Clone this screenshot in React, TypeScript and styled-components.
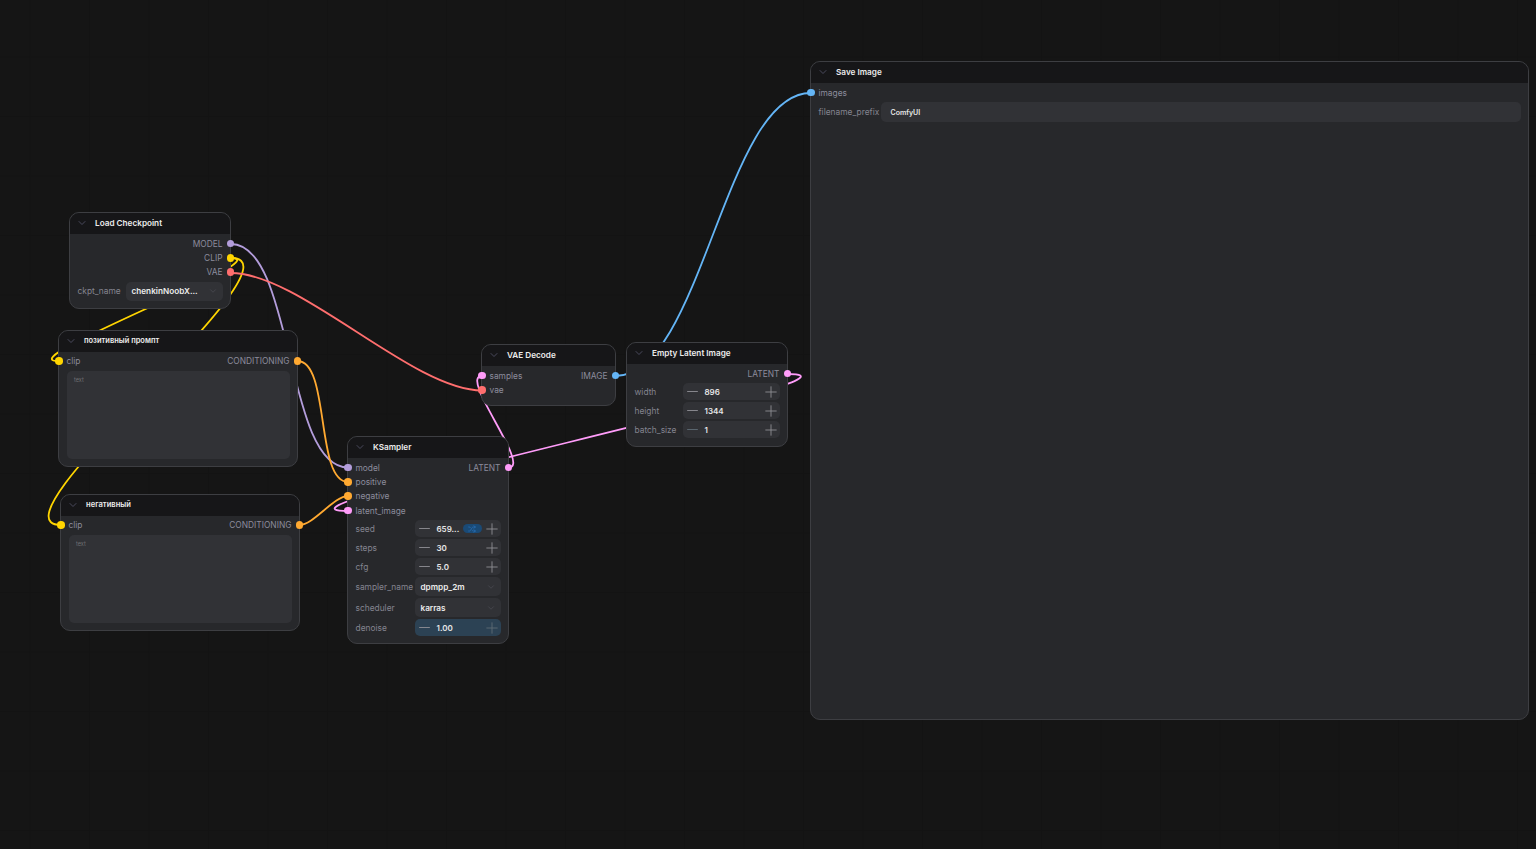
import React from "react";
import styled, { createGlobalStyle } from "styled-components";
import { ChevronDown, Minus, Plus, Shuffle } from "lucide-react";

const colors = {
  model: "#b39ddb",
  clip: "#ffd500",
  vae: "#ff6e6e",
  conditioning: "#ffa931",
  latent: "#ff9cf9",
  image: "#64b5f6",
};

type Point = [number, number];

const links: { from: Point; to: Point; color: string }[] = [
  { from: [231, 244], to: [348, 467.5], color: colors.model },
  { from: [231, 258], to: [58, 361], color: colors.clip },
  { from: [231, 258], to: [61, 525], color: colors.clip },
  { from: [231, 273], to: [482, 390.5], color: colors.vae },
  { from: [297.5, 361], to: [348, 482], color: colors.conditioning },
  { from: [299.5, 525], to: [348, 496], color: colors.conditioning },
  { from: [787.5, 374], to: [348, 511], color: colors.latent },
  { from: [508.5, 467.5], to: [482, 376], color: colors.latent },
  { from: [615.5, 376], to: [810.5, 93], color: colors.image },
];

// same spline as the graph editor: handles are a quarter of the distance
const linkPath = ({ from, to }: { from: Point; to: Point }) => {
  const dist = Math.hypot(to[0] - from[0], to[1] - from[1]) * 0.25;
  return `M${from[0]} ${from[1]} C${from[0] + dist} ${from[1]} ${to[0] - dist} ${to[1]} ${to[0]} ${to[1]}`;
};

interface SlotProps {
  label: string;
  color: string;
}

const SlotLine = ({ inSlot, outSlot }: { inSlot?: SlotProps; outSlot?: SlotProps }) => (
  <SlotRow>
    {inSlot ? (
      <SlotLabel>
        <Dot $color={inSlot.color} $side="left" />
        {inSlot.label}
      </SlotLabel>
    ) : (
      <span />
    )}
    {outSlot && (
      <SlotLabel>
        {outSlot.label}
        <Dot $color={outSlot.color} $side="right" />
      </SlotLabel>
    )}
  </SlotRow>
);

const NumberField = ({
  label,
  value,
  width,
  active,
  dimMinus,
  children,
}: {
  label: string;
  value: string;
  width: number;
  active?: boolean;
  dimMinus?: boolean;
  children?: React.ReactNode;
}) => (
  <WidgetRow>
    <WidgetLabel>{label}</WidgetLabel>
    <NumberBox $width={width} $active={active}>
      <Step $dim={dimMinus}>
        <Minus size={17} strokeWidth={1.3} />
      </Step>
      <NumberValue>{value}</NumberValue>
      {children}
      <Step $dim={active}>
        <Plus size={18} strokeWidth={1.2} />
      </Step>
    </NumberBox>
  </WidgetRow>
);

const SelectField = ({ label, value, width }: { label: string; value: string; width: number }) => (
  <WidgetRow>
    <WidgetLabel>{label}</WidgetLabel>
    <SelectBox $width={width}>
      <SelectValue>{value}</SelectValue>
      <ChevronDown size={10} strokeWidth={1.3} color="#55565e" />
    </SelectBox>
  </WidgetRow>
);

const NodeHeader = ({ title, size = 8.2 }: { title: string; size?: number }) => (
  <Header>
    <ChevronDown size={12} strokeWidth={1.4} color="#5f5f78" />
    <Title $size={size}>{title}</Title>
  </Header>
);

const PromptNode = ({ x, y, title, size }: { x: number; y: number; title: string; size: number }) => (
  <Node $x={x} $y={y} $w={240} $h={137.5}>
    <NodeHeader title={title} size={size} />
    <Body>
      <SlotLine
        inSlot={{ label: "clip", color: colors.clip }}
        outSlot={{ label: "CONDITIONING", color: colors.conditioning }}
      />
      <PromptArea>text</PromptArea>
    </Body>
  </Node>
);

export default function App() {
  return (
    <Canvas>
      <GlobalStyle />
      <LinkLayer viewBox="0 0 1536 849" fill="none">
        {links.map((link, i) => (
          <path key={i} d={linkPath(link)} stroke={link.color} strokeWidth={1.8} />
        ))}
      </LinkLayer>

      <Node $x={69} $y={212} $w={162} $h={97}>
        <NodeHeader title="Load Checkpoint" />
        <Body>
          <SlotLine outSlot={{ label: "MODEL", color: colors.model }} />
          <SlotLine outSlot={{ label: "CLIP", color: colors.clip }} />
          <SlotLine outSlot={{ label: "VAE", color: colors.vae }} />
          <Widgets>
            <SelectField label="ckpt_name" value="chenkinNoobX..." width={97} />
          </Widgets>
        </Body>
      </Node>

      <PromptNode x={58} y={329.5} title="позитивный промпт" size={7.5} />
      <PromptNode x={60} y={493.5} title="негативный" size={7.6} />

      <Node $x={347} $y={436} $w={162} $h={208}>
        <NodeHeader title="KSampler" />
        <Body>
          <SlotLine
            inSlot={{ label: "model", color: colors.model }}
            outSlot={{ label: "LATENT", color: colors.latent }}
          />
          <SlotLine inSlot={{ label: "positive", color: colors.conditioning }} />
          <SlotLine inSlot={{ label: "negative", color: colors.conditioning }} />
          <SlotLine inSlot={{ label: "latent_image", color: colors.latent }} />
          <Widgets>
            <NumberField label="seed" value="659..." width={86}>
              <SeedBadge>
                <Shuffle size={8} strokeWidth={1.6} />
              </SeedBadge>
            </NumberField>
            <NumberField label="steps" value="30" width={86} />
            <NumberField label="cfg" value="5.0" width={86} />
            <SelectField label="sampler_name" value="dpmpp_2m" width={86} />
            <SelectField label="scheduler" value="karras" width={86} />
            <NumberField label="denoise" value="1.00" width={86} active />
          </Widgets>
        </Body>
      </Node>

      <Node $x={481} $y={344} $w={135} $h={61.5}>
        <NodeHeader title="VAE Decode" />
        <Body>
          <SlotLine
            inSlot={{ label: "samples", color: colors.latent }}
            outSlot={{ label: "IMAGE", color: colors.image }}
          />
          <SlotLine inSlot={{ label: "vae", color: colors.vae }} />
        </Body>
      </Node>

      <Node $x={626} $y={342} $w={162} $h={104.5}>
        <NodeHeader title="Empty Latent Image" />
        <Body>
          <SlotLine outSlot={{ label: "LATENT", color: colors.latent }} />
          <Widgets>
            <NumberField label="width" value="896" width={97} />
            <NumberField label="height" value="1344" width={97} />
            <NumberField label="batch_size" value="1" width={97} dimMinus />
          </Widgets>
        </Body>
      </Node>

      <Node $x={810} $y={61} $w={719} $h={659}>
        <NodeHeader title="Save Image" />
        <Body>
          <SlotLine inSlot={{ label: "images", color: colors.image }} />
          <Widgets>
            <WidgetRow>
              <WidgetLabel>filename_prefix</WidgetLabel>
              <TextBox>ComfyUI</TextBox>
            </WidgetRow>
          </Widgets>
        </Body>
      </Node>
    </Canvas>
  );
}

const GlobalStyle = createGlobalStyle`
  html, body {
    margin: 0;
    padding: 0;
    background: #151515;
    font-family: Inter, "Liberation Sans", sans-serif;
  }
`;

const Canvas = styled.div`
  position: relative;
  width: 100vw;
  height: 100vh;
  overflow: hidden;
  background-color: #151515;
  background-image:
    linear-gradient(to right, #131313 1px, transparent 1px),
    linear-gradient(to bottom, #131313 1px, transparent 1px);
  background-size: 59.5px 59.5px;
  background-position: 29.5px -3px;
`;

const LinkLayer = styled.svg`
  position: absolute;
  inset: 0;
  width: 100%;
  height: 100%;
`;

const Node = styled.div<{ $x: number; $y: number; $w: number; $h: number }>`
  position: absolute;
  left: ${(p) => p.$x}px;
  top: ${(p) => p.$y}px;
  width: ${(p) => p.$w}px;
  height: ${(p) => p.$h}px;
  box-sizing: border-box;
  display: flex;
  flex-direction: column;
  background: #27282b;
  border: 1px solid #3d3e42;
  border-radius: 10px;
`;

const Header = styled.div`
  flex: 0 0 21px;
  box-sizing: border-box;
  display: flex;
  align-items: center;
  gap: 7px;
  padding: 0 0 1px 6px;
  background: #161618;
  border-radius: 9px 9px 0 0;
`;

const Title = styled.span<{ $size: number }>`
  font-size: ${(p) => p.$size}px;
  font-weight: 600;
  color: #ececec;
  white-space: nowrap;
`;

const Body = styled.div`
  flex: 1;
  min-height: 0;
  display: flex;
  flex-direction: column;
  padding: 2.5px 7.5px 7.5px;
`;

const SlotRow = styled.div`
  position: relative;
  flex: 0 0 14.3px;
  display: flex;
  align-items: center;
  justify-content: space-between;
`;

const SlotLabel = styled.span`
  font-size: 8.4px;
  color: #8c8c9c;
  white-space: nowrap;
`;

const Dot = styled.i<{ $color: string; $side: "left" | "right" }>`
  position: absolute;
  ${(p) => p.$side}: ${(p) => (p.$side === "left" ? -11.5 : -11.7)}px;
  top: 50%;
  width: 7.5px;
  height: 7.5px;
  margin-top: -3.75px;
  border-radius: 50%;
  background: ${(p) => p.$color};
`;

const Widgets = styled.div`
  display: flex;
  flex-direction: column;
  gap: 2px;
  margin-top: 2.5px;
`;

const WidgetRow = styled.div`
  display: flex;
  align-items: center;
  justify-content: space-between;
`;

const WidgetLabel = styled.span`
  font-size: 8.4px;
  color: #84848f;
  white-space: nowrap;
`;

const NumberBox = styled.div<{ $width: number; $active?: boolean }>`
  box-sizing: border-box;
  flex: 0 0 ${(p) => p.$width}px;
  height: 17px;
  display: flex;
  align-items: center;
  padding: 0 0 0 1px;
  border-radius: 5px;
  background: ${(p) => (p.$active ? "#2c4254" : "#313236")};
`;

const Step = styled.span<{ $dim?: boolean }>`
  flex: 0 0 17px;
  display: flex;
  align-items: center;
  justify-content: center;
  color: ${(p) => (p.$dim ? "#5e6b75" : "#8e8e94")};

  svg {
    flex-shrink: 0;
  }
`;

const NumberValue = styled.span`
  flex: 1;
  padding-left: 4px;
  font-size: 8px;
  font-weight: 600;
  color: #e6e6e6;
  white-space: nowrap;
`;

const SeedBadge = styled.span`
  flex: 0 0 19px;
  height: 9.5px;
  margin-right: 1px;
  display: flex;
  align-items: center;
  justify-content: center;
  border-radius: 5px;
  background: #1a4a76;
  color: #2f7fd0;
`;

const SelectBox = styled.div<{ $width: number }>`
  box-sizing: border-box;
  flex: 0 0 ${(p) => p.$width}px;
  height: 19px;
  display: flex;
  align-items: center;
  justify-content: space-between;
  padding: 0 5px 0 6px;
  border-radius: 5px;
  background: #313236;
`;

const SelectValue = styled.span`
  font-size: 8.2px;
  font-weight: 600;
  color: #ececec;
  white-space: nowrap;
`;

const TextBox = styled.div`
  flex: 0 0 640px;
  height: 19.5px;
  display: flex;
  align-items: center;
  padding-left: 10px;
  box-sizing: border-box;
  border-radius: 5px;
  background: #313236;
  font-size: 7px;
  font-weight: 600;
  color: #e6e6e6;
`;

const PromptArea = styled.div`
  flex: 1;
  margin-top: 2.5px;
  padding: 6.5px 7.5px;
  border-radius: 5px;
  background: #313236;
  font-size: 5.5px;
  color: #6f6f74;
`;
